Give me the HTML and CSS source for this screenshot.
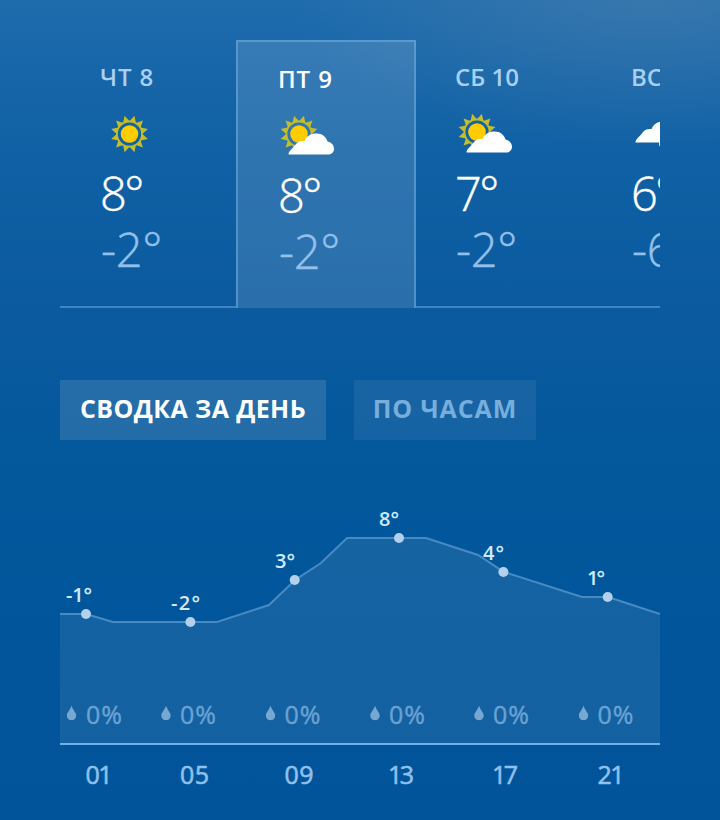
FILE: index.html
```html
<!DOCTYPE html>
<html lang="ru">
<head>
	<meta charset="utf-8">
	<meta name="viewport" content="width=device-width, initial-scale=1">
	<title>Прогноз погоды</title>
	<link rel="stylesheet" href="styles.css">
</head>
<body>
	<svg class="symbols" width="0" height="0">
		<symbol id="sun" viewBox="0 0 40 40">
			<circle cx="20" cy="20" r="8.800" fill="#fc0" />
			<circle cx="20" cy="20" r="12.500" fill="none" stroke="#b5b53a" stroke-width="1.800" />
			<path fill="#c6bd2b" fill-rule="evenodd" d="M32.800 20L38.350 24.920L31.080 26.400L33.430 33.430L26.400 31.080L24.920 38.350L20 32.800L15.080 38.350L13.600 31.080L6.570 33.430L8.920 26.400L1.650 24.920L7.200 20L1.650 15.080L8.920 13.600L6.570 6.570L13.600 8.920L15.080 1.650L20 7.200L24.920 1.650L26.400 8.920L33.430 6.570L31.080 13.600L38.350 15.080ZM20 7.700A12.300 12.300 0 0 0 20 32.300A12.300 12.300 0 0 0 20 7.700Z" />
		</symbol>
		<symbol id="cloud" viewBox="0 0 48 24">
			<path d="M1 23.500C1 20 5 18 7 15C9 11.500 12 9.500 17 10C19 5 23 2.500 29 2.500C35 2.500 38.500 6 40 10.500C44.500 11.500 46.500 14.500 46.500 18C46.500 21 44 23.500 41 23.500Z" fill="#fff" />
		</symbol>
		<symbol id="drop" viewBox="0 0 10 15">
			<path d="M5 0C6 4 9.700 7 9.700 10.300A4.700 4.500 0 0 1 .3 10.300C.3 7 4 4 5 0Z" />
		</symbol>
	</svg>
	<main class="weather">
		<section class="days">
			<div class="day">
				<div class="day-name">ЧТ 8</div>
				<svg class="day-icon" viewBox="0 0 60 44"><use href="#sun" x="9.500" y="2" width="40" height="40" /></svg>
				<div class="day-high">8°</div>
				<div class="day-low">-2°</div>
			</div>
			<div class="day day-active">
				<div class="day-name">ПТ 9</div>
				<svg class="day-icon" viewBox="0 0 60 44"><use href="#sun" x="1" y="0" width="40" height="40" /><use href="#cloud" x="9.500" y="17" width="48" height="24" /></svg>
				<div class="day-high">8°</div>
				<div class="day-low">-2°</div>
			</div>
			<div class="day">
				<div class="day-name">СБ 10</div>
				<svg class="day-icon" viewBox="0 0 60 44"><use href="#sun" x="2" y="0" width="40" height="40" /><use href="#cloud" x="10.500" y="17" width="48" height="24" /></svg>
				<div class="day-high">7°</div>
				<div class="day-low">-2°</div>
			</div>
			<div class="day">
				<div class="day-name">ВС 11</div>
				<svg class="day-icon" viewBox="0 0 60 44"><use href="#cloud" x="3.500" y="7" width="48" height="24" /><circle cx="31" cy="32" r="3" fill="#fff" /></svg>
				<div class="day-high">6°</div>
				<div class="day-low">-6°</div>
			</div>
		</section>
		<div class="tabs">
			<button class="tab tab-active">СВОДКА ЗА ДЕНЬ</button>
			<button class="tab">ПО ЧАСАМ</button>
		</div>
		<svg class="chart" viewBox="0 0 600 300">
			<path class="chart-area" d="M0 114H26L53 122H157L209 105L235 80L261 63L287 38H366L418 55L444 72L522 97H548L600 114V244H0Z" />
			<path class="chart-line" d="M0 114H26L53 122H157L209 105L235 80L261 63L287 38H366L418 55L444 72L522 97H548L600 114" />
			<path class="chart-axis" d="M0 244H600" />
			<g class="chart-dots">
				<circle cx="26" cy="114" r="5" />
				<circle cx="130.400" cy="122" r="5" />
				<circle cx="234.700" cy="80" r="5" />
				<circle cx="339" cy="38" r="5" />
				<circle cx="443.400" cy="72" r="5" />
				<circle cx="547.700" cy="97" r="5" />
			</g>
			<g class="chart-temps">
				<text x="6" y="102" textLength="26">-1°</text>
				<text x="111" y="110" textLength="29">-2°</text>
				<text x="215" y="68" textLength="20">3°</text>
				<text x="319" y="26" textLength="20">8°</text>
				<text x="423" y="60" textLength="21">4°</text>
				<text x="527" y="85" textLength="18">1°</text>
			</g>
			<g class="chart-drops">
				<use href="#drop" x="6.500" y="205.500" width="10" height="15" />
				<use href="#drop" x="101" y="205.500" width="10" height="15" />
				<use href="#drop" x="205.500" y="205.500" width="10" height="15" />
				<use href="#drop" x="310" y="205.500" width="10" height="15" />
				<use href="#drop" x="414" y="205.500" width="10" height="15" />
				<use href="#drop" x="518.500" y="205.500" width="10" height="15" />
			</g>
			<g class="chart-rain">
				<text x="26" y="224" textLength="36">0%</text>
				<text x="120" y="224" textLength="36">0%</text>
				<text x="224.500" y="224" textLength="36">0%</text>
				<text x="329" y="224" textLength="36">0%</text>
				<text x="433" y="224" textLength="36">0%</text>
				<text x="537.500" y="224" textLength="36">0%</text>
			</g>
			<g class="chart-hours">
				<text x="25.500" y="284" textLength="27">01</text>
				<text x="120" y="284" textLength="29">05</text>
				<text x="224.500" y="284" textLength="29">09</text>
				<text x="328" y="284" textLength="26">13</text>
				<text x="432" y="284" textLength="26">17</text>
				<text x="537.500" y="284" textLength="27">21</text>
			</g>
		</svg>
	</main>
</body>
</html>
```
FILE: styles.css
```css
body {
	margin: 0;
	font-family: "Open Sans", "Noto Sans", sans-serif;
	color: #fff;
	background:
		radial-gradient(ellipse 360px 150px at 650px 0, rgba(100, 140, 175, .36), transparent),
		linear-gradient(#1f6cad 0, #1766a9 70px, #0f60a4 160px, #0b5a9f 310px, #04589c 450px, #01559a 620px, #015499 820px);
}
.symbols {
	display: block;
}
.weather {
	box-sizing: border-box;
	height: 820px;
	padding: 40px 60px 0;
}
.days {
	display: grid;
	grid-template-columns: 176px 180px 176px 176px;
	height: 268px;
	overflow: hidden;
}
.day {
	box-sizing: border-box;
	padding: 20px 0 0 39px;
	border-bottom: 2px solid rgba(115, 175, 235, .5);
}
.day:first-child {
	padding-left: 40px;
}
.day-active {
	padding-left: 40px;
	border: 2px solid rgba(150, 200, 240, .5);
	border-bottom: 0;
	background: rgba(255, 255, 255, .13);
	background-clip: padding-box;
}
.day-name {
	height: 34px;
	font-size: 24px;
	font-weight: 600;
	line-height: 34px;
	color: #a9cff2;
}
.day:nth-child(-n+2) .day-name {
	letter-spacing: .9px;
}
.day-active .day-name {
	color: #fff;
}
.day-icon {
	display: block;
	width: 60px;
	height: 44px;
	margin: 18px 0 9px;
}
.day-high,
.day-low {
	height: 56px;
	font-size: 47px;
	font-weight: 300;
	line-height: 56px;
	-webkit-text-stroke: .4px;
}
.day-high {
	letter-spacing: -2.5px;
}
.day-low {
	padding-left: 1px;
	letter-spacing: -.3px;
	color: #93c0ea;
}
.tabs {
	display: flex;
	gap: 28px;
	margin-top: 72px;
}
.tab {
	width: 182px;
	height: 60px;
	padding: 0 0 5px;
	border: 0;
	font: bold 25px "Open Sans", "Noto Sans", sans-serif;
	letter-spacing: .4px;
	color: #78aedb;
	background: rgba(255, 255, 255, .07);
}
.tab:last-child {
	letter-spacing: .9px;
}
.tab-active {
	width: 266px;
	color: #fff;
	background: rgba(255, 255, 255, .12);
}
.chart {
	display: block;
	width: 600px;
	height: 300px;
	margin-top: 60px;
}
.chart-area {
	fill: rgba(255, 255, 255, .08);
}
.chart-line {
	fill: none;
	stroke: #488bc3;
	stroke-width: 2;
}
.chart-axis {
	stroke: #70b0e8;
	stroke-width: 2;
}
.chart-dots {
	fill: #b3d0ec;
}
.chart-temps {
	font-size: 20px;
	font-weight: 600;
	fill: #d0eaff;
}
.chart-drops {
	fill: #75a8d3;
}
.chart-rain {
	font-size: 25px;
	fill: #6aa3d3;
	stroke: #6aa3d3;
	stroke-width: .4px;
}
.chart-hours {
	font-size: 25px;
	fill: #90c0ec;
	stroke: #90c0ec;
	stroke-width: .6px;
}
```
